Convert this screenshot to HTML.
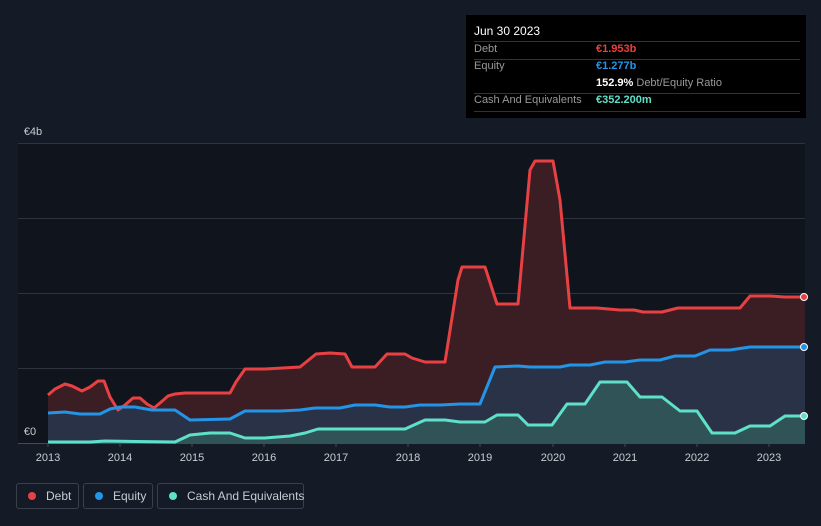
<!DOCTYPE html>
<html><head><meta charset="utf-8"><style>
html,body{margin:0;padding:0;background:#151b26;width:821px;height:526px;overflow:hidden;font-family:"Liberation Sans",sans-serif}
.tt{position:absolute;left:466px;top:15px;width:340px;height:103px;background:#000;font-size:11px;color:#999}
.tt .r{position:absolute;left:8px;width:326px;border-top:1px solid #333}
.lg{position:absolute;top:483px;height:26px;border:1px solid #3a404c;border-radius:3px;color:#c8cbd0;font-size:12px;line-height:24px;box-sizing:border-box;white-space:nowrap}
.dot{display:inline-block;width:8px;height:8px;border-radius:50%;margin:0 10px 0 11px;vertical-align:0px}
</style></head><body>
<svg width="821" height="526" style="position:absolute;left:0;top:0">
<rect x="18" y="143" width="787" height="300" fill="#10141c"/>
<g stroke="#2e343e" stroke-width="1">
<line x1="18" y1="143.5" x2="805" y2="143.5"/><line x1="18" y1="218.5" x2="805" y2="218.5"/><line x1="18" y1="293.5" x2="805" y2="293.5"/><line x1="18" y1="368.5" x2="805" y2="368.5"/><line x1="18" y1="443.5" x2="805" y2="443.5" stroke="#444a55"/>
</g>
<polygon fill="#3a1e24" points="48,443 48,395 55,389 65,384 72,386 82,391 90,387 98,381 104,381 110,397 118,410 125,405 133,398 140,398 147,404 154,408 160,403 168,396 175,394 185,393 230,393 236,382 245,369 265,369 300,367 316,354 330,353 345,354 352,367 375,367 387,354 405,354 412,358 425,362 445,362 458,280 462,267 485,267 497,304 518,304 530,170 535,161 553,161 560,200 570,308 597,308 620,310 634,310 643,312 662,312 678,308 740,308 750,296 770,296 785,297 805,297 805,443"/>
<polygon fill="#2a3248" points="48,443 48,413 65,412 80,414 100,414 110,409 120,407 135,407 152,410 175,410 190,420 230,419 245,411 280,411 300,410 315,408 340,408 355,405 375,405 390,407 405,407 420,405 440,405 460,404 480,404 495,367 518,366 530,367 560,367 570,365 590,365 605,362 625,362 640,360 660,360 675,356 695,356 710,350 730,350 750,347 805,347 805,443"/>
<polygon fill="#2f5356" points="48,443 48,442 90,442 105,441 175,442 190,435 210,433 230,433 245,438 265,438 290,436 305,433 318,429 350,429 405,429 425,420 445,420 460,422 485,422 497,415 518,415 528,425 552,425 567,404 585,404 600,382 627,382 640,397 662,397 680,411 697,411 712,433 735,433 750,426 770,426 785,416 805,416 805,443"/>
<g fill="none" stroke-width="3" stroke-linejoin="round">
<polyline stroke="#e84143" points="48,395 55,389 65,384 72,386 82,391 90,387 98,381 104,381 110,397 118,410 125,405 133,398 140,398 147,404 154,408 160,403 168,396 175,394 185,393 230,393 236,382 245,369 265,369 300,367 316,354 330,353 345,354 352,367 375,367 387,354 405,354 412,358 425,362 445,362 458,280 462,267 485,267 497,304 518,304 530,170 535,161 553,161 560,200 570,308 597,308 620,310 634,310 643,312 662,312 678,308 740,308 750,296 770,296 785,297 805,297"/>
<polyline stroke="#2394e6" points="48,413 65,412 80,414 100,414 110,409 120,407 135,407 152,410 175,410 190,420 230,419 245,411 280,411 300,410 315,408 340,408 355,405 375,405 390,407 405,407 420,405 440,405 460,404 480,404 495,367 518,366 530,367 560,367 570,365 590,365 605,362 625,362 640,360 660,360 675,356 695,356 710,350 730,350 750,347 805,347"/>
<polyline stroke="#5fe0c8" points="48,442 90,442 105,441 175,442 190,435 210,433 230,433 245,438 265,438 290,436 305,433 318,429 350,429 405,429 425,420 445,420 460,422 485,422 497,415 518,415 528,425 552,425 567,404 585,404 600,382 627,382 640,397 662,397 680,411 697,411 712,433 735,433 750,426 770,426 785,416 805,416"/>
</g>
<circle cx="804" cy="297" r="3.5" fill="#e84143" stroke="#fff" stroke-width="1"/>
<circle cx="804" cy="347" r="3.5" fill="#2394e6" stroke="#fff" stroke-width="1"/>
<circle cx="804" cy="416" r="3.5" fill="#5fe0c8" stroke="#fff" stroke-width="1"/>
<g stroke="#444a55"><line x1="48" y1="443" x2="48" y2="447"/><line x1="120" y1="443" x2="120" y2="447"/><line x1="192" y1="443" x2="192" y2="447"/><line x1="264" y1="443" x2="264" y2="447"/><line x1="336" y1="443" x2="336" y2="447"/><line x1="408" y1="443" x2="408" y2="447"/><line x1="480" y1="443" x2="480" y2="447"/><line x1="553" y1="443" x2="553" y2="447"/><line x1="625" y1="443" x2="625" y2="447"/><line x1="697" y1="443" x2="697" y2="447"/><line x1="769" y1="443" x2="769" y2="447"/></g>
<g fill="#c8cbd0" font-family="Liberation Sans, sans-serif" font-size="11" text-anchor="middle">
<text x="48" y="461">2013</text><text x="120" y="461">2014</text><text x="192" y="461">2015</text><text x="264" y="461">2016</text><text x="336" y="461">2017</text><text x="408" y="461">2018</text><text x="480" y="461">2019</text><text x="553" y="461">2020</text><text x="625" y="461">2021</text><text x="697" y="461">2022</text><text x="769" y="461">2023</text>
<text x="33" y="135">€4b</text><text x="30" y="435">€0</text>
</g>
</svg>
<div class="tt">
<div style="position:absolute;left:8px;top:9px;color:#fff;font-size:12px">Jun 30 2023</div>
<div class="r" style="top:26px"></div>
<div style="position:absolute;left:8px;top:28px">Debt</div><div style="position:absolute;left:130px;top:28px;color:#e84143;font-weight:bold">€1.953b</div>
<div class="r" style="top:44px"></div>
<div style="position:absolute;left:8px;top:45px">Equity</div><div style="position:absolute;left:130px;top:45px;color:#2394e6;font-weight:bold">€1.277b</div>
<div style="position:absolute;left:130px;top:62px"><b style="color:#fff">152.9%</b> Debt/Equity Ratio</div>
<div class="r" style="top:78px"></div>
<div style="position:absolute;left:8px;top:79px">Cash And Equivalents</div><div style="position:absolute;left:130px;top:79px;color:#5fe0c8;font-weight:bold">€352.200m</div>
<div class="r" style="top:96px"></div>
</div>
<div class="lg" style="left:16px;width:63px"><span class="dot" style="background:#e84143"></span>Debt</div>
<div class="lg" style="left:83px;width:70px"><span class="dot" style="background:#2394e6"></span>Equity</div>
<div class="lg" style="left:157px;width:147px"><span class="dot" style="background:#5fe0c8"></span>Cash And Equivalents</div>
</body></html>
